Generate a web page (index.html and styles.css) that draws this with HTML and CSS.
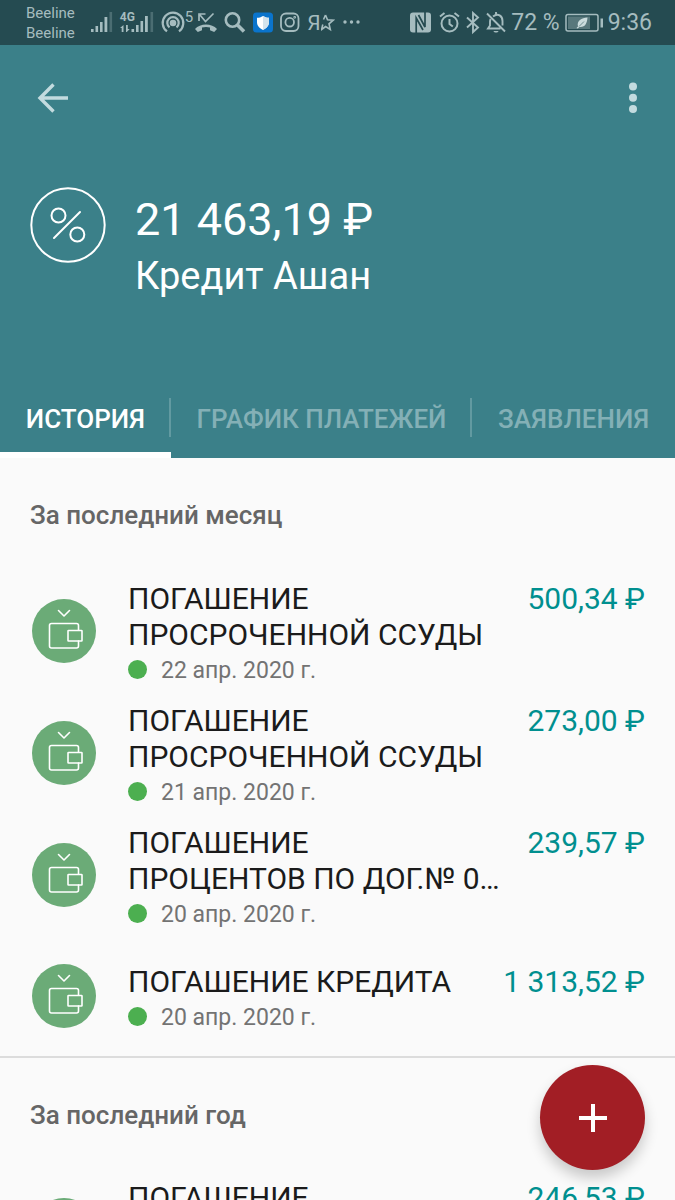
FILE: index.html
```html
<!DOCTYPE html>
<html lang="ru">
<head>
<meta charset="utf-8">
<meta name="viewport" content="width=device-width, initial-scale=1">
<title>Кредит Ашан</title>
<link rel="stylesheet" href="styles.css">
</head>
<body>
<svg class="defs" aria-hidden="true">
  <symbol id="wallet" viewBox="0 0 64 64">
    <g fill="none" stroke="#fff" stroke-width="1.6" stroke-linejoin="round" stroke-linecap="round">
      <path d="M26.500 11.500 32 17l5.500-5.500"/>
      <path d="M46.500 31v-4.500a2 2 0 0 0-2-2h-25a2 2 0 0 0-2 2v20.500a2 2 0 0 0 2 2h25a2 2 0 0 0 2-2V42"/>
      <rect x="36" y="31.500" width="14" height="10.500" rx="0.500"/>
    </g>
  </symbol>
</svg>
<div class="app">
  <div class="status">
    <div class="carriers"><span>Beeline</span><span>Beeline</span></div>
    <div class="status-icons">
      <svg width="22" height="24" viewBox="0 0 22 24" fill="currentColor"><rect y="18" width="2.600" height="3"/><rect x="4.500" y="15" width="2.600" height="6"/><rect x="9" y="11" width="2.600" height="10"/><rect x="13.500" y="6" width="2.800" height="15"/><rect x="18.500" y="1" width="2.600" height="20" opacity=".3"/></svg>
      <span class="mobile"><span class="mobile-type">4G</span><svg width="34" height="24" viewBox="0 0 34 24" fill="currentColor"><path d="M3.500 14v7H1.700v-4H0zM6 14h1.800v4h1.900L6.800 21H6z"/><rect x="11.500" y="18" width="2.600" height="3"/><rect x="16" y="14" width="2.600" height="7"/><rect x="20.500" y="10" width="2.600" height="11"/><rect x="25" y="5" width="2.800" height="16"/><rect x="30.500" y="1" width="2.600" height="20" opacity=".3"/></svg></span>
      <span class="hotspot"><svg width="24" height="24" viewBox="0 0 24 24" fill="none" stroke="currentColor" stroke-width="2.200"><circle cx="12" cy="12" r="2.200" fill="currentColor"/><path d="M8.500 16.400a5.700 5.700 0 1 1 7 0M6 20.300a10.300 10.300 0 1 1 12 0"/></svg><span>5</span></span>
      <svg width="22" height="24" viewBox="0 0 22 24" fill="none" stroke="currentColor" stroke-width="1.700"><path d="M18.500 2.500 10.500 10.500 5 4M4 10V3h6.500"/><path fill="currentColor" stroke="none" d="M0 18c5-6 17-6 22 0l-2.800 3-4.200-1.800v-2.600c-2.500-.9-5.500-.9-8 0v2.600L2.800 21z"/></svg>
      <svg width="22" height="24" viewBox="0 0 22 24" fill="none" stroke="currentColor"><circle cx="8.500" cy="9" r="6.700" stroke-width="2.600"/><path d="m13.500 14 6.500 6.500" stroke-width="3.600"/></svg>
      <svg width="20" height="24" viewBox="1 0 20 24"><rect x="1" y="1.500" width="20" height="20" rx="3.500" fill="#0a74cc"/><path d="M11 5c2 1.400 4 1.800 6 1.800v4.500c0 3.700-2.500 6-6 7.700-3.500-1.700-6-4-6-7.700V6.800C7 6.800 9 6.400 11 5z" fill="#fff"/><path d="M11 5c2 1.400 4 1.800 6 1.800v4.500c0 3.700-2.500 6-6 7.700z" fill="#d3e3ec"/></svg>
      <svg width="20" height="24" viewBox="0 0 20 24" fill="none" stroke="currentColor" stroke-width="1.800"><rect x="1" y="2.500" width="17.500" height="17.500" rx="5"/><circle cx="9.700" cy="11.200" r="4.300"/><circle cx="14.700" cy="6.300" r=".5"/></svg>
      <span class="rated"><span>Я</span><svg width="14" height="24" viewBox="1 0 14 24" fill="none" stroke="currentColor" stroke-width="1.600"><path d="m5.500 4 2 4.700 5.700.5-4.200 3.600 1.300 5.700-4.700-3-4 3 1.200-5M5.500 4l-2 4.500"/></svg></span>
      <svg width="18" height="24" viewBox="0 0 18 24" fill="currentColor"><circle cx="3" cy="11" r="1.700"/><circle cx="9.500" cy="11" r="1.700"/><circle cx="16" cy="11" r="1.700"/></svg>
    </div>
    <div class="status-right">
      <svg class="nfc" width="22" height="24" viewBox="0 0 22 24"><rect y="1.500" width="21" height="20" rx="3" fill="currentColor"/><path d="M6.200 22V7l6.800 12M15 1v15L8.500 4" fill="none" stroke="#254b51" stroke-width="1.700"/></svg>
      <svg width="21" height="24" viewBox="0 0 21 24" fill="none" stroke="currentColor" stroke-width="2"><circle cx="10.500" cy="12.500" r="8"/><path d="M10.500 8v5l3.300 2.500M1 5.500 5.500 2M20 5.500 15.500 2"/></svg>
      <svg width="16" height="24" viewBox="0 0 16 24" fill="none" stroke="currentColor" stroke-width="1.900"><path d="m2 6.500 11 10-5 4.500V2l5 4.500-11 10"/></svg>
      <svg width="20" height="24" viewBox="0 0 20 24" fill="none" stroke="currentColor" stroke-width="1.900"><path d="m1 2.500 18 18M7 5.500c5-4 9.500-.5 9.500 4.500v4.500M4.500 8c-.7 1.500-.5 4-.5 6.500l-2 3h12.500M10 1v3"/><path d="M7.500 20h5c-.5 2-4.500 2-5 0z" fill="currentColor" stroke="none"/></svg>
      <span>72 %</span>
      <svg width="38" height="24" viewBox="0 0 38 24"><rect x="1" y="3.500" width="32" height="16.500" rx="2" fill="none" stroke="currentColor" stroke-width="1.500"/><rect x="3" y="5.500" width="22" height="12.500" fill="currentColor" opacity=".4"/><path d="M35.500 7.500h2.500v9h-2.500z" fill="currentColor"/><path d="M22.500 6.500c-6 .5-11 3-9.500 9l-1.500 1.500 1 .5 2-1.500c6 .5 7.500-4 8-9.500z" fill="#cbdcdd"/><path d="m14 15.500 5-5" stroke="#58787d" stroke-width=".8"/></svg>
      <span>9:36</span>
    </div>
  </div>

  <header class="header">
    <div class="toolbar">
      <button class="icon-button" type="button" aria-label="Назад"><svg width="32" height="32" viewBox="0 0 32 32" fill="none" stroke="currentColor" stroke-width="3.400"><path d="M31 16H3M16.500 2.500 3 16l13.500 13.500"/></svg></button>
      <button class="icon-button" type="button" aria-label="Меню"><svg width="10" height="32" viewBox="0 0 10 32" fill="currentColor"><circle cx="5" cy="4.500" r="4"/><circle cx="5" cy="15.800" r="4"/><circle cx="5" cy="27" r="4"/></svg></button>
    </div>
    <div class="account">
      <svg width="76" height="76" viewBox="0 0 76 76" fill="none" stroke="#fff" stroke-width="2"><circle cx="38" cy="38" r="36.700"/><circle cx="28.500" cy="28.500" r="7"/><circle cx="47.300" cy="47.500" r="7"/><path d="M24 51 50 25" stroke-linecap="round"/></svg>
      <div>
        <div class="balance">21 463,19 ₽</div>
        <h1 class="account-name">Кредит Ашан</h1>
      </div>
    </div>
    <nav class="tabs">
      <a class="tab tab-active" href="#history">ИСТОРИЯ</a>
      <a class="tab" href="#schedule">ГРАФИК ПЛАТЕЖЕЙ</a>
      <a class="tab" href="#requests">ЗАЯВЛЕНИЯ</a>
    </nav>
  </header>

  <main class="history" id="history">
    <section class="group">
      <h2 class="group-title">За последний месяц</h2>
      <ul class="list">
        <li class="row">
          <svg class="row-icon"><use href="#wallet"/></svg>
          <div class="row-body">
            <div class="row-top"><span class="row-title">ПОГАШЕНИЕ ПРОСРОЧЕННОЙ ССУДЫ</span><span class="amount">500,34 ₽</span></div>
            <div class="date">22 апр. 2020 г.</div>
          </div>
        </li>
        <li class="row">
          <svg class="row-icon"><use href="#wallet"/></svg>
          <div class="row-body">
            <div class="row-top"><span class="row-title">ПОГАШЕНИЕ ПРОСРОЧЕННОЙ ССУДЫ</span><span class="amount">273,00 ₽</span></div>
            <div class="date">21 апр. 2020 г.</div>
          </div>
        </li>
        <li class="row">
          <svg class="row-icon"><use href="#wallet"/></svg>
          <div class="row-body">
            <div class="row-top"><span class="row-title">ПОГАШЕНИЕ<br>ПРОЦЕНТОВ ПО ДОГ.№ 0…</span><span class="amount">239,57 ₽</span></div>
            <div class="date">20 апр. 2020 г.</div>
          </div>
        </li>
        <li class="row">
          <svg class="row-icon"><use href="#wallet"/></svg>
          <div class="row-body">
            <div class="row-top"><span class="row-title">ПОГАШЕНИЕ КРЕДИТА</span><span class="amount">1 313,52 ₽</span></div>
            <div class="date">20 апр. 2020 г.</div>
          </div>
        </li>
      </ul>
    </section>
    <section class="group">
      <h2 class="group-title">За последний год</h2>
      <ul class="list">
        <li class="row">
          <svg class="row-icon"><use href="#wallet"/></svg>
          <div class="row-body row-body-tall">
            <div class="row-top"><span class="row-title">ПОГАШЕНИЕ</span><span class="amount">246,53 ₽</span></div>
          </div>
        </li>
      </ul>
    </section>
  </main>

  <button class="fab" type="button" aria-label="Добавить"><svg width="28" height="28" viewBox="0 0 28 28" stroke="#fff" stroke-width="4"><path d="M14 0v28M0 14h28"/></svg></button>
</div>
</body>
</html>
```
FILE: styles.css
```css
* {
  box-sizing: border-box;
}

body {
  margin: 0;
  font-family: Roboto, "Noto Sans", sans-serif;
  background: #fafafa;
  color: #1b1b1b;
}

svg {
  flex: none;
}

.defs {
  display: none;
}

.app {
  position: relative;
  display: flex;
  flex-direction: column;
  height: 100vh;
  overflow: hidden;
}

/* Status bar */
.status {
  display: flex;
  flex: none;
  align-items: center;
  height: 45px;
  padding: 0 23px 0 26px;
  background: #254b51;
  color: #a5bcbf;
  white-space: nowrap;
}

.carriers {
  display: flex;
  flex-direction: column;
  margin-right: 16px;
  font-size: 15px;
  line-height: 20px;
}

.status-icons {
  display: flex;
  align-items: center;
  gap: 7px;
}

.mobile {
  position: relative;
  display: flex;
}

.mobile-type {
  position: absolute;
  top: 0;
  left: 0;
  font-size: 12px;
  font-weight: 700;
  line-height: 12px;
}

.hotspot {
  display: flex;
  margin-right: -5px;
  font-size: 15px;
  line-height: 12px;
}

.rated {
  display: flex;
  font-size: 21px;
  line-height: 24px;
}

.status-right {
  display: flex;
  align-items: center;
  gap: 5px;
  margin-left: auto;
  font-size: 23px;
  line-height: 24px;
}

.nfc {
  margin-right: 2px;
}

/* Header */
.header {
  flex: none;
  background: #3b8089;
  color: #fff;
}

.toolbar {
  display: flex;
  align-items: center;
  justify-content: space-between;
  height: 105px;
  padding: 0 37px;
}

.icon-button {
  display: flex;
  padding: 0;
  border: 0;
  background: none;
  color: #c3dbdf;
}

.account {
  display: flex;
  gap: 29px;
  padding: 37px 30px 80px;
}

.balance {
  padding-top: 6px;
  font-size: 45px;
  line-height: 54px;
}

.account-name {
  margin: 6px 0 0;
  font-size: 38px;
  font-weight: 400;
  line-height: 46px;
}

.tabs {
  display: flex;
  height: 79px;
}

.tab {
  flex: 1 0 auto;
  position: relative;
  padding: 25px 24px 0;
  color: #84b0b6;
  font-size: 26px;
  font-weight: 500;
  line-height: 30px;
  text-align: center;
  text-decoration: none;
  white-space: nowrap;
}

.tab + .tab::before {
  content: "";
  position: absolute;
  top: 19px;
  left: -2px;
  width: 2px;
  height: 39px;
  background: #629aa1;
}

.tab-active {
  border-bottom: 6px solid #fff;
  color: #fff;
}

/* History */
.history {
  flex: 1;
  min-height: 0;
  overflow: hidden;
}

.group + .group {
  border-top: 2px solid #dcdcdc;
}

.group-title {
  margin: 0;
  padding: 42px 30px 40px;
  color: #666;
  font-size: 26px;
  font-weight: 500;
  line-height: 30px;
}

.list {
  margin: 0;
  padding: 0;
  list-style: none;
}

.row {
  display: flex;
  align-items: center;
  gap: 32px;
  min-height: 122px;
  padding: 0 30px 0 32px;
}

.row:last-child {
  min-height: 120px;
}

.row-icon {
  width: 64px;
  height: 64px;
  border-radius: 50%;
  background: #6bab77;
}

.row-body {
  flex: 1;
  min-width: 0;
  padding-top: 4px;
}

.row-body-tall {
  min-height: 108px;
}

.row-top {
  display: flex;
  justify-content: space-between;
  gap: 24px;
  font-size: 30px;
  line-height: 36px;
}

.amount {
  flex: none;
  color: #008f8f;
}

.date {
  display: flex;
  align-items: center;
  gap: 14px;
  margin-top: 4px;
  color: #737373;
  font-size: 23px;
  line-height: 28px;
}

.date::before {
  content: "";
  width: 19px;
  height: 19px;
  margin-bottom: 3px;
  border-radius: 50%;
  background: #4caf50;
}

.fab {
  position: absolute;
  right: 30px;
  bottom: 30px;
  display: flex;
  align-items: center;
  justify-content: center;
  width: 105px;
  height: 105px;
  padding: 0;
  border: 0;
  border-radius: 50%;
  background: #a21e25;
  box-shadow: 0 8px 14px rgba(0, 0, 0, 0.2);
}
```
